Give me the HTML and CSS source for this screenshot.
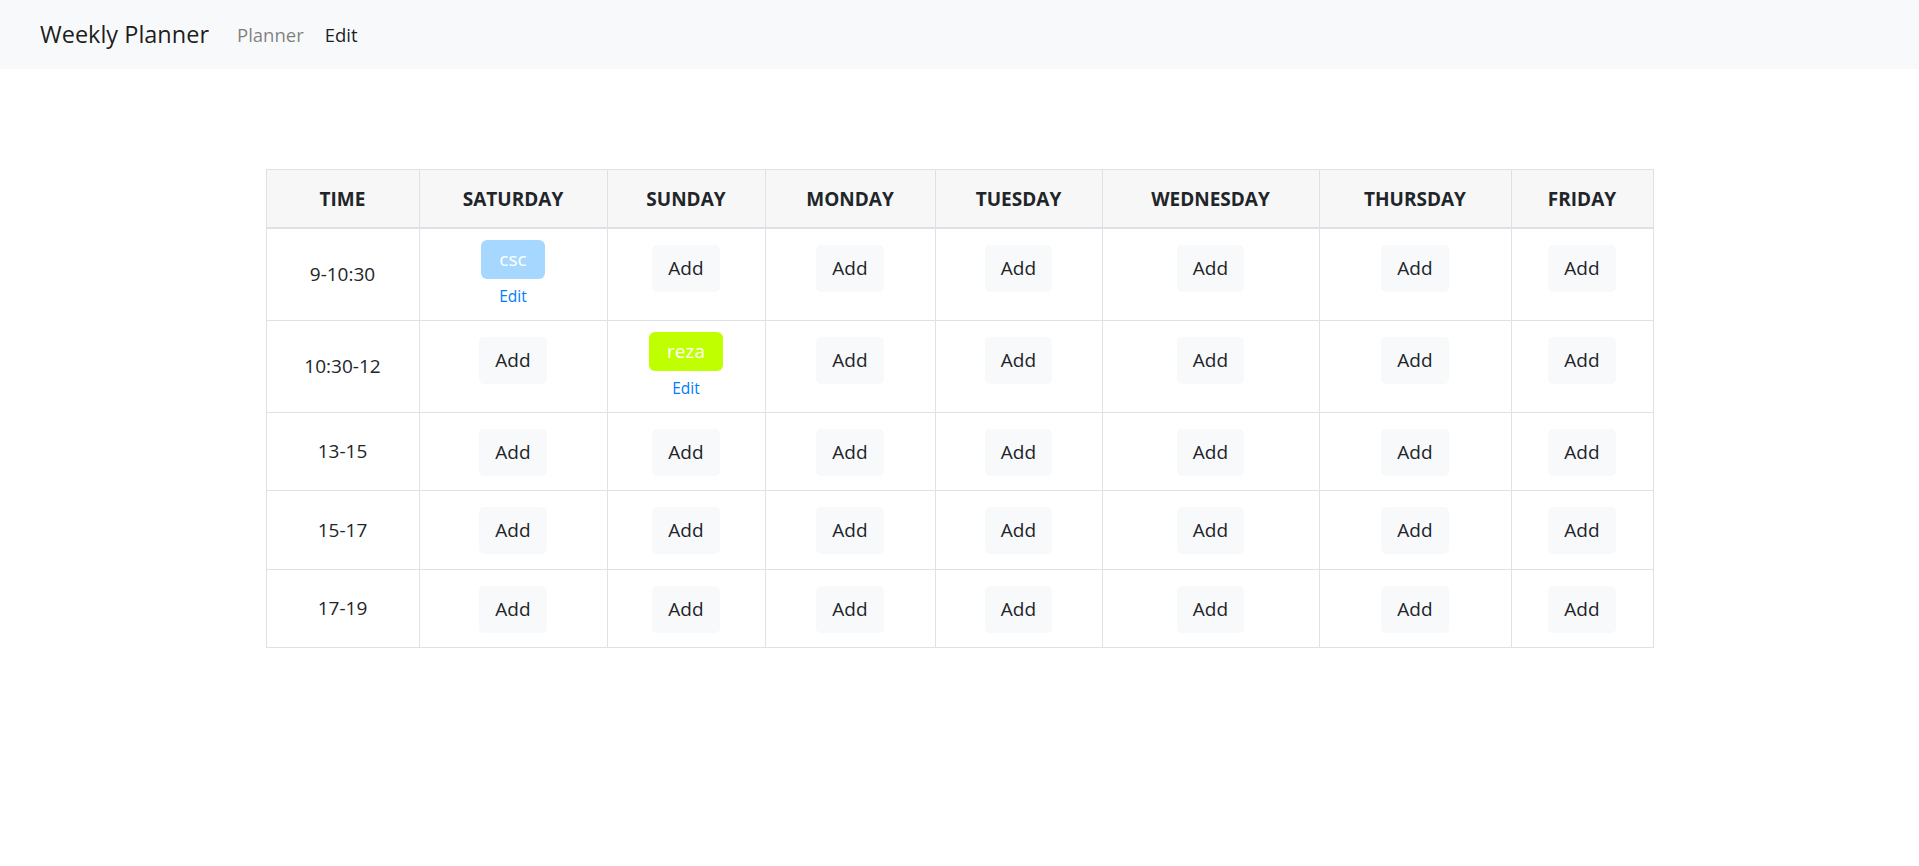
FILE: index.html
```html
<!DOCTYPE html>
<html lang="en">
<head>
<meta charset="utf-8">
<title>Weekly Planner</title>
<link rel="stylesheet" href="styles.css">
</head>
<body>
<nav class="navbar">
  <a class="brand" href="#">Weekly Planner</a>
  <ul class="nav">
    <li><a class="nav-link" href="#">Planner</a></li>
    <li><a class="nav-link active" href="#">Edit</a></li>
  </ul>
</nav>
<main class="main">
  <table class="planner">
    <colgroup>
      <col style="width:153px">
      <col style="width:188px">
      <col style="width:158px">
      <col style="width:170px">
      <col style="width:167px">
      <col style="width:217px">
      <col style="width:192px">
      <col style="width:142px">
    </colgroup>
    <thead>
      <tr>
        <th>TIME</th><th>SATURDAY</th><th>SUNDAY</th><th>MONDAY</th><th>TUESDAY</th><th>WEDNESDAY</th><th>THURSDAY</th><th>FRIDAY</th>
      </tr>
    </thead>
    <tbody>
      <tr>
        <td class="time">9-10:30</td>
        <td><span class="badge badge-blue">csc</span><a class="edit" href="#">Edit</a></td>
        <td><button class="add">Add</button></td>
        <td><button class="add">Add</button></td>
        <td><button class="add">Add</button></td>
        <td><button class="add">Add</button></td>
        <td><button class="add">Add</button></td>
        <td><button class="add">Add</button></td>
      </tr>
      <tr>
        <td class="time">10:30-12</td>
        <td><button class="add">Add</button></td>
        <td><span class="badge badge-lime">reza</span><a class="edit" href="#">Edit</a></td>
        <td><button class="add">Add</button></td>
        <td><button class="add">Add</button></td>
        <td><button class="add">Add</button></td>
        <td><button class="add">Add</button></td>
        <td><button class="add">Add</button></td>
      </tr>
      <tr>
        <td class="time">13-15</td>
        <td><button class="add">Add</button></td>
        <td><button class="add">Add</button></td>
        <td><button class="add">Add</button></td>
        <td><button class="add">Add</button></td>
        <td><button class="add">Add</button></td>
        <td><button class="add">Add</button></td>
        <td><button class="add">Add</button></td>
      </tr>
      <tr>
        <td class="time">15-17</td>
        <td><button class="add">Add</button></td>
        <td><button class="add">Add</button></td>
        <td><button class="add">Add</button></td>
        <td><button class="add">Add</button></td>
        <td><button class="add">Add</button></td>
        <td><button class="add">Add</button></td>
        <td><button class="add">Add</button></td>
      </tr>
      <tr>
        <td class="time">17-19</td>
        <td><button class="add">Add</button></td>
        <td><button class="add">Add</button></td>
        <td><button class="add">Add</button></td>
        <td><button class="add">Add</button></td>
        <td><button class="add">Add</button></td>
        <td><button class="add">Add</button></td>
        <td><button class="add">Add</button></td>
      </tr>
    </tbody>
  </table>
</main>
</body>
</html>
```

FILE: styles.css
```css
* { box-sizing: border-box; }
html, body { margin: 0; padding: 0; }
body {
  font-family: "Open Sans", "Noto Sans", sans-serif;
  color: #212529;
  background: #fff;
}
.navbar {
  height: 69px;
  background: #f8f9fa;
  display: flex;
  align-items: center;
  padding: 0 40px;
}
.brand {
  font-size: 23.5px;
  color: rgba(0,0,0,.9);
  text-decoration: none;
  margin-right: 28px;
  margin-top: -2px;
}
.nav {
  list-style: none;
  margin: 0;
  padding: 0;
  display: flex;
  gap: 21px;
}
.nav-link {
  font-size: 18.5px;
  color: rgba(0,0,0,.5);
  text-decoration: none;
}
.nav-link.active { color: rgba(0,0,0,.9); }
.main {
  display: flex;
  justify-content: center;
  padding-top: 100px;
}
.planner {
  border-collapse: collapse;
  table-layout: fixed;
  width: 1387px;
  border: 1px solid #dee2e6;
}
.planner th {
  background: #f7f7f7;
  font-weight: 700;
  font-size: 19px;
  height: 58px;
  padding: 2px 0 0;
  text-align: center;
  vertical-align: middle;
  border: 1px solid #dee2e6;
  border-bottom-width: 2px;
  color: #212529;
}
.planner td {
  border: 1px solid #dee2e6;
  padding: 10px;
  text-align: center;
  vertical-align: top;
}
.planner td.time {
  vertical-align: middle;
  font-size: 19px;
}
.add {
  font-family: inherit;
  font-size: 19px;
  line-height: 29px;
  color: #212529;
  background: #f8f9fa;
  border: none;
  border-radius: 5px;
  padding: 9px 16px 9px;
  margin: 6px 0 4.5px;
  cursor: pointer;
}
.badge {
  display: inline-block;
  color: #fff;
  font-size: 19px;
  line-height: 29px;
  padding: 5px 18px;
  margin-top: 1px;
  border-radius: 6px;
  font-weight: 500;
}
.badge-blue { background: #a6d8ff; }
.badge-lime { background: #bfff00; }
.edit {
  display: block;
  font-size: 15.5px;
  line-height: 24px;
  margin-top: 5px;
  margin-bottom: 2px;
  color: #007bff;
  text-decoration: none;
}
```
